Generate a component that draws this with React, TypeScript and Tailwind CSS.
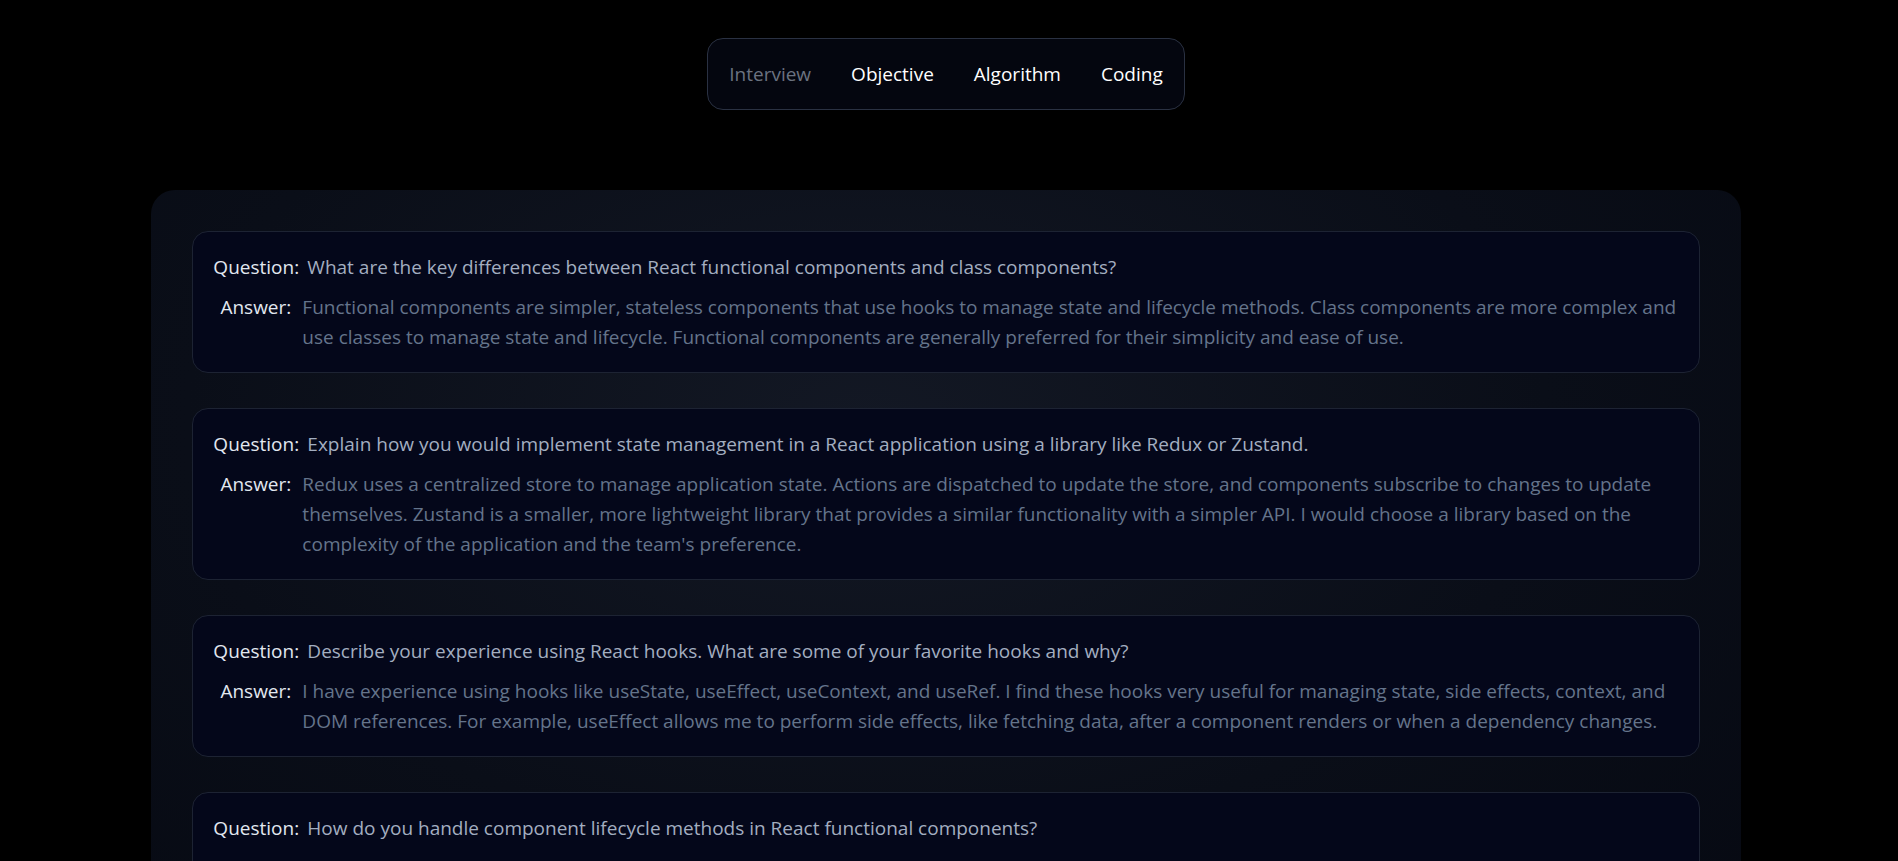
import React from 'react';

const tabs = [
  { label: 'Interview', active: false },
  { label: 'Objective', active: true },
  { label: 'Algorithm', active: true },
  { label: 'Coding', active: true },
];

const qa = [
  {
    q: 'What are the key differences between React functional components and class components?',
    a: 'Functional components are simpler, stateless components that use hooks to manage state and lifecycle methods. Class components are more complex and use classes to manage state and lifecycle. Functional components are generally preferred for their simplicity and ease of use.',
  },
  {
    q: 'Explain how you would implement state management in a React application using a library like Redux or Zustand.',
    a: "Redux uses a centralized store to manage application state. Actions are dispatched to update the store, and components subscribe to changes to update themselves. Zustand is a smaller, more lightweight library that provides a similar functionality with a simpler API. I would choose a library based on the complexity of the application and the team's preference.",
  },
  {
    q: 'Describe your experience using React hooks. What are some of your favorite hooks and why?',
    a: 'I have experience using hooks like useState, useEffect, useContext, and useRef. I find these hooks very useful for managing state, side effects, context, and DOM references. For example, useEffect allows me to perform side effects, like fetching data, after a component renders or when a dependency changes.',
  },
  {
    q: 'How do you handle component lifecycle methods in React functional components?',
    a: 'In functional components, lifecycle behaviour is handled with the useEffect hook. An effect with an empty dependency array runs once after mount, and its cleanup function runs on unmount, which covers most of what componentDidMount and componentWillUnmount did.',
  },
];

export default function App() {
  return (
    <div
      className="min-h-screen bg-black pr-[6px] overflow-hidden"
      style={{ fontFamily: '"Open Sans", "Noto Sans", sans-serif' }}
    >
      {/* tabs */}
      <div className="flex justify-center pt-[38px]">
        <nav className="flex items-center h-[72px] px-[1px] rounded-2xl border border-[#2a3142] bg-[#04060f]">
          {tabs.map((t) => (
            <button
              key={t.label}
              className={
                'px-5 text-[19px] leading-none ' +
                (t.active ? 'text-white font-medium' : 'text-[#6b7280]')
              }
            >
              {t.label}
            </button>
          ))}
        </nav>
      </div>

      {/* question list */}
      <div className="mt-20 mx-auto w-[84%] rounded-3xl bg-[radial-gradient(ellipse_at_45%_30%,#131824_0%,#0a0e18_55%,#060912_100%)] px-[41px] pt-[41px] pb-10">
        <div className="flex flex-col gap-[35px]">
          {qa.map((item, i) => (
            <div
              key={i}
              className="rounded-2xl border border-[#1d2333] bg-[#04071a] px-5 py-5 text-[19px] leading-[30px]"
            >
              <div className="grid grid-cols-[85px_1fr] gap-x-1 gap-y-[10px]">
                <span className="text-center text-[#e2e8f0]">Question:</span>
                <span className="pl-[5px] text-[#a3aec0]">{item.q}</span>
                <span className="text-center text-[#e2e8f0]">Answer:</span>
                <span className="text-[#64748b]">{item.a}</span>
              </div>
            </div>
          ))}
        </div>
      </div>
    </div>
  );
}
